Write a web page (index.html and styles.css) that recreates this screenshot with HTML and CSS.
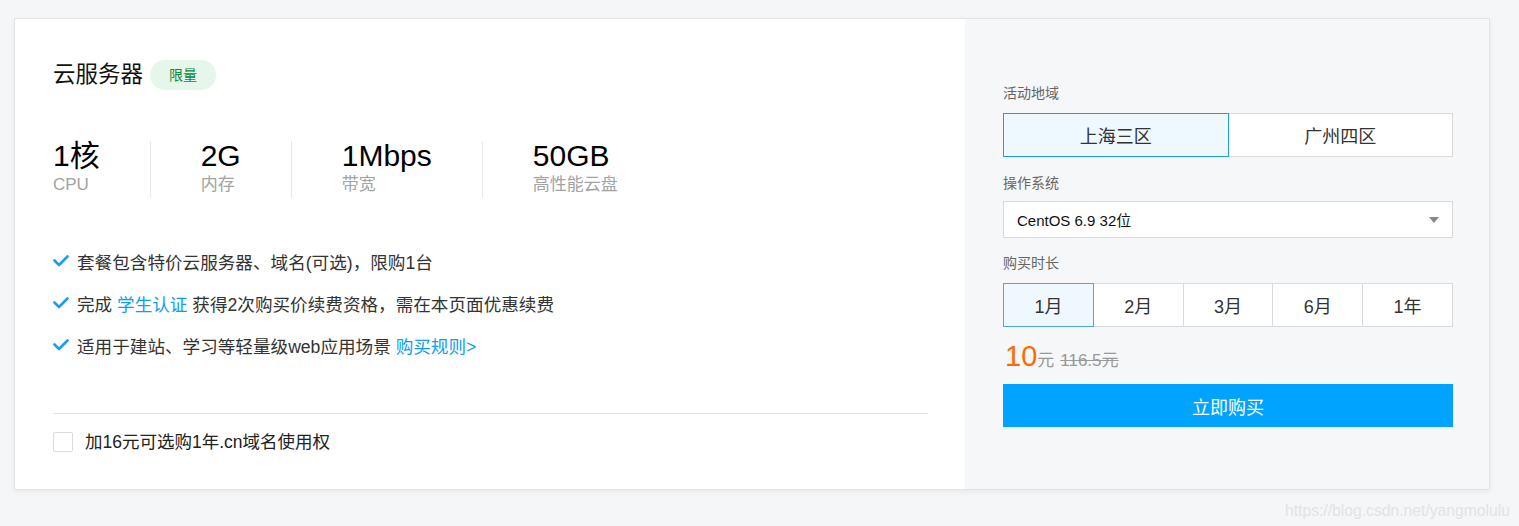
FILE: index.html
```html
<!DOCTYPE html>
<html lang="zh-CN">
<head>
<meta charset="utf-8">
<title>云服务器</title>
<link rel="stylesheet" href="styles.css">
</head>
<body>
<div class="card">
  <section class="main">
    <div class="head">
      <h1 class="title">云服务器</h1>
      <span class="badge">限量</span>
    </div>
    <div class="specs">
      <div class="spec"><div class="num">1核</div><div class="lbl">CPU</div></div>
      <div class="spec"><div class="num">2G</div><div class="lbl">内存</div></div>
      <div class="spec"><div class="num">1Mbps</div><div class="lbl">带宽</div></div>
      <div class="spec last"><div class="num">50GB</div><div class="lbl">高性能云盘</div></div>
    </div>
    <ul class="features">
      <li><svg class="tick" viewBox="0 0 16 12" width="16" height="12"><polyline points="1.5,5.5 6,10 14.5,1.5" fill="none" stroke="#1a9ff0" stroke-width="2.6" stroke-linecap="round" stroke-linejoin="round"/></svg><span>套餐包含特价云服务器、域名(可选)，限购1台</span></li>
      <li><svg class="tick" viewBox="0 0 16 12" width="16" height="12"><polyline points="1.5,5.5 6,10 14.5,1.5" fill="none" stroke="#1a9ff0" stroke-width="2.6" stroke-linecap="round" stroke-linejoin="round"/></svg><span>完成 <a class="link">学生认证</a> 获得2次购买价续费资格，需在本页面优惠续费</span></li>
      <li><svg class="tick" viewBox="0 0 16 12" width="16" height="12"><polyline points="1.5,5.5 6,10 14.5,1.5" fill="none" stroke="#1a9ff0" stroke-width="2.6" stroke-linecap="round" stroke-linejoin="round"/></svg><span>适用于建站、学习等轻量级web应用场景 <a class="link">购买规则&gt;</a></span></li>
    </ul>
    <div class="extra">
      <span class="checkbox"></span>
      <span class="extra-text">加16元可选购1年.cn域名使用权</span>
    </div>
  </section>
  <aside class="side">
    <div class="label first">活动地域</div>
    <div class="seg region">
      <div class="opt active">上海三区</div>
      <div class="opt">广州四区</div>
    </div>
    <div class="label os">操作系统</div>
    <div class="select">
      <span>CentOS 6.9 32位</span>
      <span class="caret"></span>
    </div>
    <div class="label dur">购买时长</div>
    <div class="seg duration">
      <div class="opt active">1月</div>
      <div class="opt">2月</div>
      <div class="opt">3月</div>
      <div class="opt">6月</div>
      <div class="opt">1年</div>
    </div>
    <div class="price">
      <span class="now">10</span><span class="unit">元</span><span class="old">116.5元</span>
    </div>
    <div class="buy">立即购买</div>
  </aside>
</div>
<div class="watermark">https://blog.csdn.net/yangmolulu</div>
</body>
</html>
```

FILE: styles.css
```css
* { box-sizing: border-box; }
html, body { margin: 0; padding: 0; }
body {
  background: #f5f6f8;
  font-family: "Liberation Sans", Arial, "Noto Sans CJK SC", sans-serif;
  color: #333;
  width: 1519px;
  height: 526px;
  padding: 18px 0 0 14px;
  position: relative;
  overflow: hidden;
}
.card {
  width: 1476px;
  height: 472px;
  display: flex;
  background: #fff;
  border: 1px solid #e2e3e6;
  box-shadow: 0 2px 6px rgba(0, 0, 0, 0.06);
}
.main {
  width: 950px;
  padding: 41px 37px 0 38px;
}
.head {
  display: flex;
  align-items: center;
  height: 30px;
}
.title {
  margin: 0;
  font-size: 22.5px;
  font-weight: normal;
  color: #111;
  line-height: 30px;
}
.badge {
  margin-left: 7px;
  width: 66px;
  height: 30px;
  border-radius: 15px;
  background: #e5f6ea;
  color: #0a8a3f;
  font-size: 14px;
  line-height: 30px;
  text-align: center;
}
.specs {
  display: flex;
  margin-top: 51px;
}
.spec {
  padding-right: 50px;
  margin-right: 50px;
  border-right: 1px solid #e8e8e8;
  height: 57px;
}
.spec.last { border-right: none; }
.num {
  font-size: 30px;
  line-height: 29px;
  color: #000;
}
.lbl {
  font-size: 17px;
  line-height: 24px;
  padding-top: 3px;
  color: #a3a3a3;
}
.features {
  list-style: none;
  margin: 51px 0 0;
  padding: 0;
  display: flex;
  flex-direction: column;
  gap: 18px;
}
.features li {
  display: flex;
  align-items: center;
  height: 24px;
  font-size: 17.6px;
  color: #333;
}
.tick { margin-right: 8px; flex: none; }
.link { color: #0b9ef5; text-decoration: none; }
.extra {
  margin-top: 56px;
  border-top: 1px solid #e3e3e3;
  padding-top: 18px;
  display: flex;
  height: 59px;
  align-items: flex-start;
}
.checkbox {
  width: 20px;
  height: 20px;
  border: 1px solid #dcdcdc;
  border-radius: 2px;
  background: #fff;
  flex: none;
}
.extra-text {
  margin-left: 12px;
  font-size: 17.5px;
  line-height: 20px;
  color: #222;
}
.side {
  flex: 1;
  background: #f6f7f9;
  padding: 64px 36px 0 38px;
}
.label {
  font-size: 14px;
  line-height: 20px;
  color: #666;
  margin-top: 16px;
  margin-bottom: 10px;
}
.label.first { margin-top: 0; }
.label.os { margin-bottom: 8px; }
.label.dur { margin-top: 15px; }
.seg {
  display: flex;
  height: 44px;
}
.opt {
  flex: 1;
  border: 1px solid #dadada;
  background: #fff;
  display: flex;
  align-items: center;
  justify-content: center;
  font-size: 18px;
  color: #333;
  position: relative;
}
.opt + .opt { margin-left: -1px; }
.opt.active {
  border-color: #1e9cf0;
  background: #eff7ff;
  z-index: 1;
}
.duration .opt.active { border-color: #4aa8ea; }
.select {
  height: 37px;
  border: 1px solid #dadada;
  background: #fff;
  display: flex;
  align-items: center;
  justify-content: space-between;
  padding: 0 13px 0 13px;
  font-size: 15px;
  color: #111;
}
.caret {
  width: 0;
  height: 0;
  border-left: 5px solid transparent;
  border-right: 5px solid transparent;
  border-top: 6px solid #888;
}
.price {
  margin-top: 14px;
  height: 30px;
  display: flex;
  align-items: baseline;
  padding-left: 2px;
}
.now {
  font-size: 29px;
  color: #ff6a00;
  line-height: 30px;
}
.unit {
  font-size: 17px;
  color: #999;
}
.old {
  font-size: 17px;
  color: #999;
  text-decoration: line-through;
  margin-left: 6px;
}
.buy {
  margin-top: 13px;
  height: 43px;
  background: #00a4ff;
  color: #fff;
  font-size: 18px;
  display: flex;
  align-items: center;
  justify-content: center;
}
.watermark {
  position: absolute;
  right: 9px;
  bottom: 6px;
  font-size: 15.7px;
  color: #e1e3e7;
}
```
